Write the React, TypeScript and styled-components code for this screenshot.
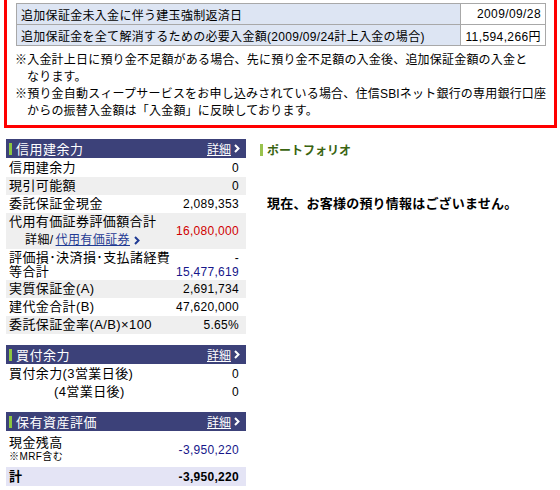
import React from 'react';
import styled, { createGlobalStyle } from 'styled-components';

const GlobalStyle = createGlobalStyle`
  body {
    margin: 0;
    background: #fff;
    font-family: "Liberation Sans", "Noto Sans CJK JP", sans-serif;
    font-size: 12px;
    color: #000;
  }
`;

const Page = styled.div`
  width: 560px;
  padding: 0 0 0 4px;
  box-sizing: border-box;
`;

const Notice = styled.div`
  width: 553px;
  box-sizing: border-box;
  border: 3px solid #ff0000;
  border-top: none;
  padding: 3px 8px 5px 8px;
`;

const InfoTable = styled.table`
  width: 530px;
  margin-left: 1px;
  border-collapse: collapse;
  font-size: 12px;

  td {
    border: 1px solid #a8a8a8;
    height: 20px;
    padding: 0 4px;
    white-space: nowrap;
  }
`;

const InfoLabel = styled.td`
  background: #dde5f3;
  letter-spacing: 0.3px;
`;

const InfoValue = styled.td`
  width: 74px;
  text-align: right;
  background: #fff;
  letter-spacing: 0.4px;
`;

const Notes = styled.div`
  margin-top: 6px;
  line-height: 17px;
  letter-spacing: 0.2px;
  white-space: nowrap;
`;

const Note = styled.p`
  margin: 0;
  padding-left: 12px;
  text-indent: -12px;
`;

const Main = styled.div`
  display: flex;
  margin-top: 11px;
`;

const LeftCol = styled.div`
  width: 240px;
  margin-left: 2px;
  flex-shrink: 0;
`;

const Panel = styled.section`
  margin-bottom: 11px;
`;

const PanelHeader = styled.div`
  height: 19px;
  margin-bottom: 1px;
  background: #3c4179;
  color: #fff;
  display: flex;
  align-items: center;
  padding: 0 6px 0 3px;
  font-size: 13px;
`;

const GreenBar = styled.span<{ $dark?: boolean }>`
  display: inline-block;
  width: 3px;
  height: 12px;
  background: ${p => (p.$dark ? '#99c24d' : '#8cc63f')};
  margin-right: 4px;
`;

const PanelTitle = styled.span`
  flex: 1;
  letter-spacing: 0.5px;
`;

const DetailLink = styled.a`
  color: #fff;
  display: flex;
  align-items: center;
  gap: 3px;
  font-size: 12px;

  span {
    text-decoration: underline;
  }
`;

const Row = styled.div<{ $shade?: 'grey' | 'lavender'; $h?: number }>`
  display: flex;
  justify-content: space-between;
  align-items: center;
  height: ${p => p.$h || 18}px;
  padding: 0 7px 0 3px;
  background: ${p =>
    p.$shade === 'grey' ? '#efefef' : p.$shade === 'lavender' ? '#e4e4f5' : '#fff'};
`;

const Label = styled.div<{ $bold?: boolean; $indent?: number }>`
  font-size: 13px;
  letter-spacing: 0.4px;
  line-height: 18px;
  font-weight: ${p => (p.$bold ? 700 : 400)};
  padding-left: ${p => p.$indent || 0}px;
`;

const StackLabel = styled.div<{ $lh?: number }>`
  font-size: 13px;
  letter-spacing: 0.4px;
  line-height: ${p => p.$lh || 14}px;
  display: flex;
  flex-direction: column;
  justify-content: center;
`;

const SubLink = styled.div`
  font-size: 12px;
  line-height: 18px;
  padding-left: 16px;
  display: flex;
  align-items: center;

  a {
    color: #1f3a93;
    text-decoration: underline;
    margin-left: 2px;
  }
`;

const Small = styled.span`
  font-size: 10px;
  line-height: 14px;
`;

const Value = styled.div<{ $tone?: 'red' | 'blue'; $bold?: boolean }>`
  font-size: 12px;
  letter-spacing: 0.3px;
  text-align: right;
  font-weight: ${p => (p.$bold ? 700 : 400)};
  color: ${p => (p.$tone === 'red' ? '#d00000' : p.$tone === 'blue' ? '#16168a' : '#000')};
`;

const ValueStack = styled.div`
  display: flex;
  flex-direction: column;
  justify-content: center;
  text-align: right;
  line-height: 14px;
  font-size: 12px;
  letter-spacing: 0.3px;
`;

const BlueFigure = styled.span`
  color: #16168a;
`;

const RightCol = styled.div`
  flex: 1;
  padding-left: 14px;
`;

const SectionHeading = styled.div`
  display: flex;
  align-items: center;
  margin-top: 2px;
  font-size: 12px;
  font-weight: 700;
  color: #3a6410;
`;

const EmptyMessage = styled.p`
  margin: 35px 0 0 7px;
  font-size: 13px;
  font-weight: 700;
  letter-spacing: 0.2px;
`;

const LinkChevron = styled.span`
  display: flex;
  margin-left: 4px;
`;

const Chevron = ({ color }: { color: string }) => (
  <svg width="6" height="9" viewBox="0 0 6 9">
    <path d="M1 1 L4.5 4.5 L1 8" stroke={color} strokeWidth="2" fill="none" />
  </svg>
);

const Header = ({ title }: { title: string }) => (
  <PanelHeader>
    <GreenBar />
    <PanelTitle>{title}</PanelTitle>
    <DetailLink>
      <span>詳細</span>
      <Chevron color="#fff" />
    </DetailLink>
  </PanelHeader>
);

const notes = [
  ['※入金計上日に預り金不足額がある場合、先に預り金不足額の入金後、追加保証金額の入金と', 'なります。'],
  ['※預り金自動スィープサービスをお申し込みされている場合、住信SBIネット銀行の専用銀行口座', 'からの振替入金額は「入金額」に反映しております。'],
];

export default function App() {
  return (
    <Page>
      <GlobalStyle />
      <Notice>
        <InfoTable>
          <tbody>
            <tr>
              <InfoLabel>追加保証金未入金に伴う建玉強制返済日</InfoLabel>
              <InfoValue>2009/09/28</InfoValue>
            </tr>
            <tr>
              <InfoLabel>追加保証金を全て解消するための必要入金額(2009/09/24計上入金の場合)</InfoLabel>
              <InfoValue>11,594,266円</InfoValue>
            </tr>
          </tbody>
        </InfoTable>
        <Notes>
          {notes.map((lines, i) => (
            <Note key={i}>
              {lines[0]}
              <br />
              {lines[1]}
            </Note>
          ))}
        </Notes>
      </Notice>

      <Main>
        <LeftCol>
          <Panel>
            <Header title="信用建余力" />
            <Row>
              <Label>信用建余力</Label>
              <Value>0</Value>
            </Row>
            <Row $shade="grey">
              <Label>現引可能額</Label>
              <Value>0</Value>
            </Row>
            <Row>
              <Label>委託保証金現金</Label>
              <Value>2,089,353</Value>
            </Row>
            <Row $shade="grey" $h={36}>
              <StackLabel $lh={18}>
                <span>代用有価証券評価額合計</span>
                <SubLink>
                  詳細/<a>代用有価証券</a>
                  <LinkChevron>
                    <Chevron color="#1f3a93" />
                  </LinkChevron>
                </SubLink>
              </StackLabel>
              <Value $tone="red">16,080,000</Value>
            </Row>
            <Row $h={31}>
              <StackLabel>
                <span>評価損･決済損･支払諸経費</span>
                <span>等合計</span>
              </StackLabel>
              <ValueStack>
                <span>-</span>
                <BlueFigure>15,477,619</BlueFigure>
              </ValueStack>
            </Row>
            <Row $shade="grey">
              <Label>実質保証金(A)</Label>
              <Value>2,691,734</Value>
            </Row>
            <Row>
              <Label>建代金合計(B)</Label>
              <Value>47,620,000</Value>
            </Row>
            <Row $shade="grey">
              <Label>委託保証金率(A/B)×100</Label>
              <Value>5.65%</Value>
            </Row>
          </Panel>

          <Panel>
            <Header title="買付余力" />
            <Row>
              <Label>買付余力(3営業日後)</Label>
              <Value>0</Value>
            </Row>
            <Row>
              <Label $indent={45}>(4営業日後)</Label>
              <Value>0</Value>
            </Row>
          </Panel>

          <Panel>
            <Header title="保有資産評価" />
            <Row $h={35}>
              <StackLabel>
                <span>現金残高</span>
                <Small>※MRF含む</Small>
              </StackLabel>
              <Value $tone="blue">-3,950,220</Value>
            </Row>
            <Row $shade="lavender" $h={19}>
              <Label $bold>計</Label>
              <Value $bold>-3,950,220</Value>
            </Row>
          </Panel>
        </LeftCol>

        <RightCol>
          <SectionHeading>
            <GreenBar $dark />
            ポートフォリオ
          </SectionHeading>
          <EmptyMessage>現在、お客様の預り情報はございません。</EmptyMessage>
        </RightCol>
      </Main>
    </Page>
  );
}
